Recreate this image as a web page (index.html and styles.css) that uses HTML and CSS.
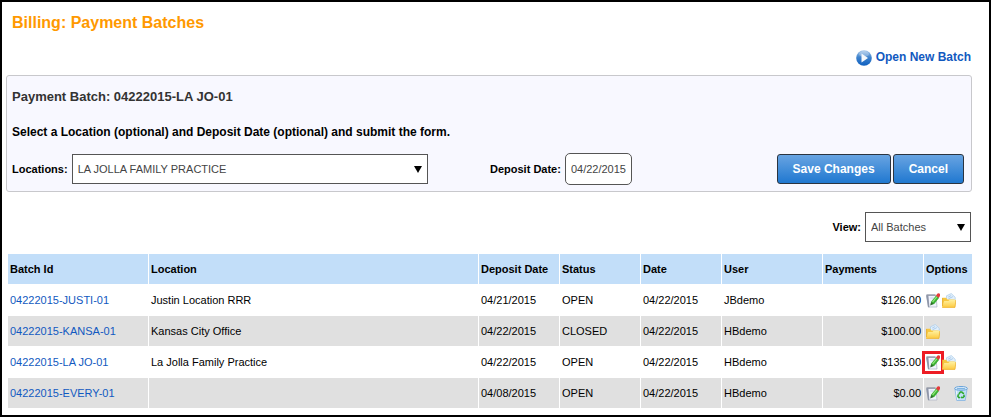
FILE: index.html
```
<!DOCTYPE html>
<html lang="en">
<head>
    <meta charset="UTF-8">
    <meta name="viewport" content="width=device-width, initial-scale=1.0">
    <title>Billing: Payment Batches</title>
    <link rel="stylesheet" href="styles.css">
</head>
<body>
    <!-- shared icons -->
    <svg class="icon-defs" aria-hidden="true">
        <defs>
            <linearGradient id="folder-fill" x1="0" y1="0" x2="0" y2="1">
                <stop offset="0" stop-color="#fff1a0"/>
                <stop offset="1" stop-color="#fdca40"/>
            </linearGradient>
            <linearGradient id="play-fill" x1="0" y1="0" x2="0" y2="1">
                <stop offset="0" stop-color="#a9c9ea"/>
                <stop offset="0.45" stop-color="#3f83cd"/>
                <stop offset="1" stop-color="#0d5fc0"/>
            </linearGradient>
        </defs>
        <symbol id="icon-edit" viewBox="0 0 14 15">
            <path d="M0.5 2.5H10l1 11.5H2.5z" fill="#f0f3fd" stroke="#b4bac9" stroke-width="0.8"/>
            <path d="M0.2 2.5l1.8 11.8h1.4L2.4 2.5z" fill="#8f96a8"/>
            <path d="M0.5 2H9.5" stroke="#848a9a" stroke-width="1.2"/>
            <path d="M4.2 5h3.5" stroke="#c8d1ee"/>
            <path d="M4.8 11.2l0.6-3L10.2 2.4l3 2.3-5 6.3z" fill="#3db135"/>
            <path d="M6.6 8.8l4.4-5.2" stroke="#94e87e" stroke-width="1.2"/>
            <path d="M4.2 12.6l0.9-3.6 2.7 2z" fill="#2f6b2c"/>
            <path d="M10 2.8L11 1q1.2-1.3 2.4-0.4t0.4 2.6L12.8 4.9z" fill="#e53a3a"/>
        </symbol>
        <symbol id="icon-folder" viewBox="0 0 14 15">
            <path d="M4.5 7V2.8L9.3 0.5l3.9 3.8V9H4.5z" fill="#e2effb" stroke="#a9cbea" stroke-width="0.7"/>
            <path d="M6.2 4.1l3-1.6M6.5 5.8l4.4-2.2" stroke="#9cc3e8" stroke-width="0.8"/>
            <path d="M0.2 13.5V4.8h3.9l1.3 1.6h7.2V13.5z" fill="#f7c740"/>
            <path d="M0.2 14.5V13l2-4.9h4.2l1.4-1.3h6.1L13 14.5z" fill="url(#folder-fill)"/>
            <path d="M0.2 14.4H13l0.9-7.4" fill="none" stroke="#efb32f" stroke-width="0.8"/>
            <path d="M0.6 13V5" stroke="#e2a92c" stroke-width="0.8"/>
        </symbol>
        <symbol id="icon-recycle" viewBox="0 0 14 15">
            <path d="M1 3l1.8 11.5h8.4L13 3z" fill="#c3dff7" stroke="#84b4e2" stroke-width="0.8"/>
            <path d="M2.2 4.5l1.4 9.3" stroke="#eef7ff"/>
            <ellipse cx="7" cy="2.4" rx="6.4" ry="1.9" fill="#e8f4fd" stroke="#5a9bd8" stroke-width="0.9"/>
            <ellipse cx="7" cy="2.7" rx="4.4" ry="0.9" fill="#7fb4e2"/>
            <g fill="none" stroke="#2ea82a" stroke-width="1.5">
                <path d="M5 7.8l1.4-1.7h1.5l0.9 1.3"/>
                <path d="M9.7 8.6l0.5 1.7-1.2 1.2H7.6"/>
                <path d="M6 11.5H4.6l-0.8-1.3 0.6-1.4"/>
            </g>
            <path d="M8 7.9h2.1V5.9zM7.9 10.2v2.4l-1.6-1.2zM3.3 8.8h2.6L4.7 7.4z" fill="#2ea82a"/>
        </symbol>
        <symbol id="icon-play" viewBox="0 0 16 16">
            <circle cx="8" cy="8" r="7.8" fill="url(#play-fill)"/>
            <ellipse cx="8" cy="4" rx="5" ry="3" fill="#fff" opacity="0.25"/>
            <path d="M5.5 3.4L12 8l-6.5 4.6z" fill="#f4f8fc"/>
        </symbol>
    </svg>

    <main class="page">
        <h1>Billing: Payment Batches</h1>

        <div class="actions">
            <a class="new-batch" href="#">
                <svg class="play"><use href="#icon-play"/></svg>
                Open New Batch
            </a>
        </div>

        <form class="batch-form">
            <h2>Payment Batch: 04222015-LA JO-01</h2>
            <p>Select a Location (optional) and Deposit Date (optional) and submit the form.</p>

            <div class="form-row">
                <div class="field location-field">
                    <label for="location">Locations:</label>
                    <span class="select">
                        <select id="location">
                            <option>LA JOLLA FAMILY PRACTICE</option>
                        </select>
                    </span>
                </div>
                <div class="field">
                    <label for="deposit-date">Deposit Date:</label>
                    <input type="text" id="deposit-date" value="04/22/2015">
                </div>
                <div class="buttons">
                    <button type="submit">Save Changes</button>
                    <button type="button">Cancel</button>
                </div>
            </div>
        </form>

        <div class="field view-field">
            <label for="view">View:</label>
            <span class="select">
                <select id="view">
                    <option>All Batches</option>
                </select>
            </span>
        </div>

        <table class="batches">
            <colgroup>
                <col class="col-id">
                <col>
                <col class="col-date">
                <col class="col-date">
                <col class="col-date">
                <col class="col-user">
                <col class="col-user">
                <col class="col-options">
            </colgroup>
            <thead>
                <tr>
                    <th>Batch Id</th>
                    <th>Location</th>
                    <th>Deposit Date</th>
                    <th>Status</th>
                    <th>Date</th>
                    <th>User</th>
                    <th>Payments</th>
                    <th>Options</th>
                </tr>
            </thead>
            <tbody>
                <tr>
                    <td><a href="#">04222015-JUSTI-01</a></td>
                    <td>Justin Location RRR</td>
                    <td>04/21/2015</td>
                    <td>OPEN</td>
                    <td>04/22/2015</td>
                    <td>JBdemo</td>
                    <td class="amount">$126.00</td>
                    <td>
                        <div class="options">
                            <a href="#" aria-label="Edit"><svg><use href="#icon-edit"/></svg></a>
                            <a href="#" aria-label="Open"><svg><use href="#icon-folder"/></svg></a>
                        </div>
                    </td>
                </tr>
                <tr>
                    <td><a href="#">04222015-KANSA-01</a></td>
                    <td>Kansas City Office</td>
                    <td>04/22/2015</td>
                    <td>CLOSED</td>
                    <td>04/22/2015</td>
                    <td>HBdemo</td>
                    <td class="amount">$100.00</td>
                    <td>
                        <div class="options">
                            <a href="#" aria-label="Open"><svg><use href="#icon-folder"/></svg></a>
                        </div>
                    </td>
                </tr>
                <tr>
                    <td><a href="#">04222015-LA JO-01</a></td>
                    <td>La Jolla Family Practice</td>
                    <td>04/22/2015</td>
                    <td>OPEN</td>
                    <td>04/22/2015</td>
                    <td>HBdemo</td>
                    <td class="amount">$135.00</td>
                    <td>
                        <div class="options">
                            <a class="highlight" href="#" aria-label="Edit"><svg><use href="#icon-edit"/></svg></a>
                            <a href="#" aria-label="Open"><svg><use href="#icon-folder"/></svg></a>
                        </div>
                    </td>
                </tr>
                <tr>
                    <td><a href="#">04222015-EVERY-01</a></td>
                    <td></td>
                    <td>04/08/2015</td>
                    <td>OPEN</td>
                    <td>04/22/2015</td>
                    <td>HBdemo</td>
                    <td class="amount">$0.00</td>
                    <td>
                        <div class="options spread">
                            <a href="#" aria-label="Edit"><svg><use href="#icon-edit"/></svg></a>
                            <a href="#" aria-label="Delete"><svg><use href="#icon-recycle"/></svg></a>
                        </div>
                    </td>
                </tr>
            </tbody>
        </table>
    </main>
</body>
</html>
```
FILE: styles.css
```
* {
    box-sizing: border-box;
}

body {
    margin: 0;
    background-color: #fff;
    color: #000;
    font-family: "Liberation Sans", Arial, sans-serif;
    font-size: 11px;
}

.icon-defs {
    position: absolute;
    width: 0;
    height: 0;
}

.page {
    min-height: 100vh;
    padding: 11px 17px 5px 4px;
    border: 2px solid #000;
}

a {
    color: #1159c0;
    text-decoration: none;
}

a:hover {
    text-decoration: underline;
}

h1 {
    margin: 0 6px;
    color: #f90;
    font-size: 16px;
    line-height: 20px;
}

.actions {
    display: flex;
    justify-content: flex-end;
    margin: 16px 1px 9px;
}

.new-batch {
    display: flex;
    align-items: center;
    gap: 4px;
    font-size: 12px;
    font-weight: bold;
    line-height: 17px;
}

.play {
    width: 16px;
    height: 16px;
}

.batch-form {
    padding: 13px 7px 6px 5px;
    border: 1px solid #c8c8cc;
    border-radius: 3px;
    background-color: #f8f8ff;
}

.batch-form h2 {
    margin: 0 0 19px;
    color: #333;
    font-size: 13px;
    line-height: 16px;
}

.batch-form p {
    margin: 0 0 13px;
    font-size: 12px;
    font-weight: bold;
    line-height: 16px;
}

.form-row {
    display: flex;
    align-items: center;
    gap: 62px;
}

.field {
    display: flex;
    align-items: center;
    gap: 4px;
}

label {
    font-weight: bold;
    white-space: nowrap;
}

.location-field {
    flex: 0 1 416px;
}

.location-field .select {
    flex: 1;
}

.select {
    position: relative;
}

.select::after {
    content: "";
    position: absolute;
    top: 12px;
    right: 6px;
    border-top: 7px solid #000;
    border-right: 4px solid transparent;
    border-left: 4px solid transparent;
    pointer-events: none;
}

select,
input {
    display: block;
    width: 100%;
    height: 30px;
    padding: 0 5px;
    border: 1px solid #555;
    border-radius: 0;
    background-color: #fff;
    color: #444;
    font-family: inherit;
    font-size: 11px;
    appearance: none;
}

input {
    width: 67px;
    height: 32px;
    border-radius: 5px;
}

.buttons {
    display: flex;
    gap: 2px;
    margin-left: auto;
}

button {
    height: 30px;
    padding: 0 15px;
    border: 1px solid #2b3440;
    border-radius: 3px;
    background: linear-gradient(#68a4e2, #2078d0);
    color: #fff;
    font-family: inherit;
    font-size: 12px;
    font-weight: bold;
    cursor: pointer;
}

.view-field {
    justify-content: flex-end;
    margin: 20px 1px 11px;
}

.view-field .select {
    width: 106px;
}

/* batch list */
.batches {
    width: 100%;
    margin-left: 1px;
    border-spacing: 1px;
    table-layout: fixed;
}

.col-id {
    width: 140px;
}

.col-date {
    width: 80px;
}

.col-user {
    width: 100px;
}

.col-options {
    width: 48px;
}

.batches th,
.batches td {
    height: 30px;
    padding: 0 2px;
    text-align: left;
    white-space: nowrap;
}

.batches th {
    background-color: #c2def9;
}

.batches tbody tr:nth-child(even) td {
    background-color: #e0e0e0;
}

.batches .amount {
    text-align: right;
}

.options {
    display: flex;
    gap: 2px;
}

.options.spread {
    justify-content: space-between;
    padding-right: 2px;
}

.options a {
    display: block;
}

.options svg {
    display: block;
    width: 14px;
    height: 15px;
}

.highlight {
    outline: 3px solid #ed1c24;
    outline-offset: 1px;
}
```
